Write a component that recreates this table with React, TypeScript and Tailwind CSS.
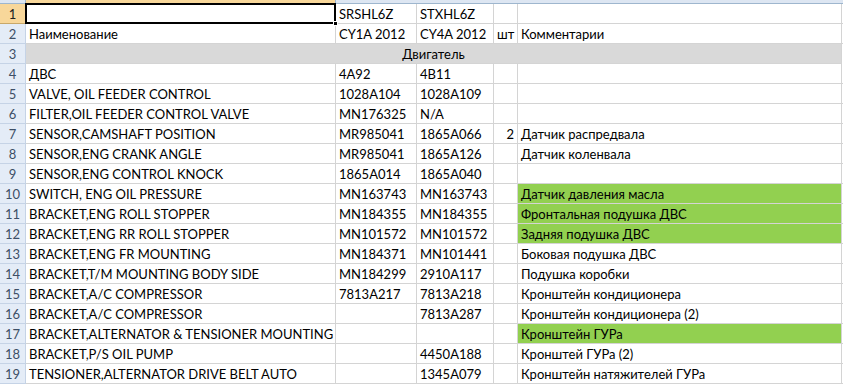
import React from "react";

type Row = {
  a?: string;
  b?: string;
  c?: string;
  d?: string;
  e?: string;
  green?: boolean;
};

const rows: Row[] = [
  { b: "SRSHL6Z", c: "STXHL6Z" },
  { a: "Наименование", b: "CY1A 2012", c: "CY4A 2012", d: "шт", e: "Комментарии" },
  {},
  { a: "ДВС", b: "4A92", c: "4B11" },
  { a: "VALVE, OIL FEEDER CONTROL", b: "1028A104", c: "1028A109" },
  { a: "FILTER,OIL FEEDER CONTROL VALVE", b: "MN176325", c: "N/A" },
  { a: "SENSOR,CAMSHAFT POSITION", b: "MR985041", c: "1865A066", d: "2", e: "Датчик распредвала" },
  { a: "SENSOR,ENG CRANK ANGLE", b: "MR985041", c: "1865A126", e: "Датчик коленвала" },
  { a: "SENSOR,ENG CONTROL KNOCK", b: "1865A014", c: "1865A040" },
  { a: "SWITCH, ENG OIL PRESSURE", b: "MN163743", c: "MN163743", e: "Датчик давления масла", green: true },
  { a: "BRACKET,ENG ROLL STOPPER", b: "MN184355", c: "MN184355", e: "Фронтальная подушка ДВС", green: true },
  { a: "BRACKET,ENG RR ROLL STOPPER", b: "MN101572", c: "MN101572", e: "Задняя подушка ДВС", green: true },
  { a: "BRACKET,ENG FR MOUNTING", b: "MN184371", c: "MN101441", e: "Боковая подушка ДВС" },
  { a: "BRACKET,T/M MOUNTING BODY SIDE", b: "MN184299", c: "2910A117", e: "Подушка коробки" },
  { a: "BRACKET,A/C COMPRESSOR", b: "7813A217", c: "7813A218", e: "Кронштейн кондиционера" },
  { a: "BRACKET,A/C COMPRESSOR", c: "7813A287", e: "Кронштейн кондиционера (2)" },
  { a: "BRACKET,ALTERNATOR & TENSIONER MOUNTING", e: "Кронштейн ГУРа", green: true },
  { a: "BRACKET,P/S OIL PUMP", c: "4450A188", e: "Кронштей ГУРа (2)" },
  { a: "TENSIONER,ALTERNATOR DRIVE BELT AUTO", c: "1345A079", e: "Кронштейн натяжителей ГУРа" },
];

const cell = "h-[20px] border-r border-b border-[#d4d4d4] px-[3px] leading-[20px] whitespace-nowrap overflow-visible";

export default function App() {
  return (
    <div
      className="w-[843px] h-[384px] overflow-hidden bg-white text-[13px] text-black"
      style={{ fontFamily: "Lato, 'Noto Sans', sans-serif" }}
    >
      {/* column header strip */}
      <div className="flex h-[4px] border-b border-[#9eb6ce]">
        <div className="w-[26px] bg-[#dde6f2] border-r border-[#9eb6ce]" />
        <div className="w-[310px] bg-[#f8d79a] border-r border-[#9eb6ce]" />
        <div className="flex-1 bg-[#dde6f2]" />
      </div>
      {rows.map((r, i) => {
        const n = i + 1;
        const header = (
          <div
            className={`w-[26px] h-[20px] shrink-0 border-r border-b text-center leading-[20px] ${
              n === 1 ? "bg-[#f8d79a] border-[#c8a86a] text-[#202020]" : "bg-[#e4ecf7] border-[#c5d3e6] text-[#3d4f66]"
            }`}
          >
            {n}
          </div>
        );
        if (n === 3) {
          return (
            <div key={n} className="flex">
              {header}
              <div className="w-[816px] h-[20px] bg-[#d9d9d9] border-r border-b border-[#d4d4d4] text-center leading-[20px]">
                Двигатель
              </div>
            </div>
          );
        }
        return (
          <div key={n} className="flex">
            {header}
            <div className={`w-[310px] shrink-0 ${cell} ${n === 1 ? "relative" : ""}`}>
              {r.a}
              {n === 1 && (
                <>
                  <div className="absolute -left-px -top-px w-[311px] h-[21px] border-2 border-black" />
                  <div className="absolute right-[-3px] bottom-[-3px] w-[5px] h-[5px] bg-black border border-white" />
                </>
              )}
            </div>
            <div className={`w-[81px] shrink-0 ${cell}`}>{r.b}</div>
            <div className={`w-[77px] shrink-0 ${cell}`}>{r.c}</div>
            <div className={`w-[24px] shrink-0 ${cell} ${r.d === "2" ? "text-right" : ""}`}>{r.d}</div>
            <div className={`w-[324px] shrink-0 ${cell} ${r.green ? "bg-[#92d050]" : ""}`}>{r.e}</div>
            <div className="flex-1 h-[20px] border-b border-[#d4d4d4]" />
          </div>
        );
      })}
    </div>
  );
}
